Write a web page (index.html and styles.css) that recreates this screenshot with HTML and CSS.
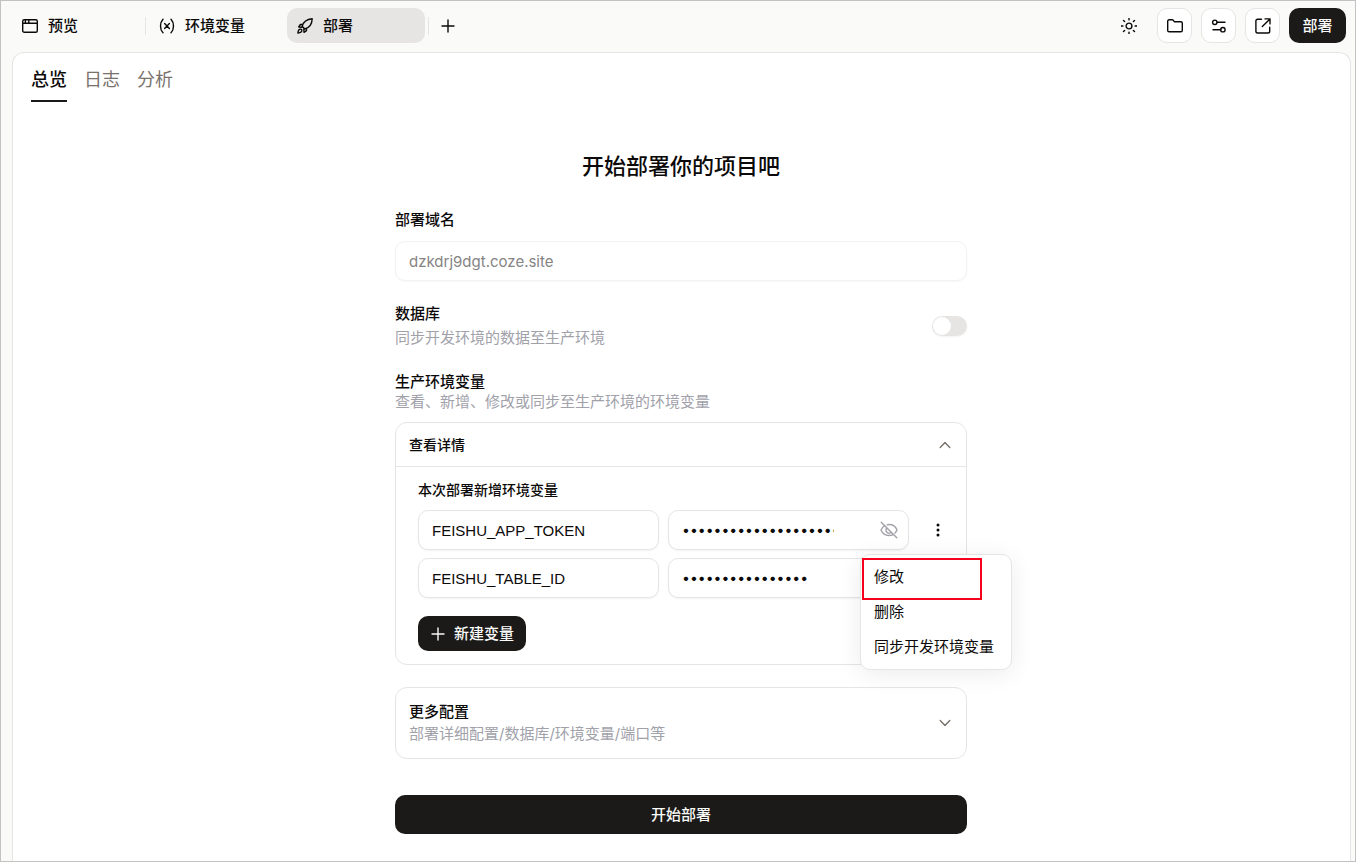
FILE: index.html
```html
<!DOCTYPE html>
<html lang="zh-CN">

<head>
    <meta charset="UTF-8">
    <meta name="viewport" content="width=device-width, initial-scale=1">
    <title>部署</title>
    <link rel="stylesheet" href="styles.css">
</head>

<body>
    <!-- 顶部栏 -->
    <header class="topbar">
        <nav class="tabs">
            <button type="button" class="tab tab-first">
                <svg class="icon" viewBox="0 0 16 16"><rect x="0.7" y="1.7" width="14.6" height="12.6" rx="1.6"/><path d="M0.7 5.2h14.6M3.4 2v3M6.8 2v3"/></svg>
                预览
            </button>
            <span class="separator"></span>
            <button type="button" class="tab">
                <svg class="icon" viewBox="0 0 16 16"><path d="M4 1.2C2.300 3 1.500 5.300 1.500 8s.8 5 2.500 6.800M12 1.200C13.700 3 14.500 5.300 14.500 8s-.8 5-2.500 6.800M5.600 5.600l4.800 4.800M10.400 5.600l-4.800 4.800"/></svg>
                环境变量
            </button>
            <button type="button" class="tab active">
                <svg class="icon" viewBox="0 0 16 16"><path d="M5.200 8.300C6.200 4.500 9.500 1.300 15.200 .800c-.2 5.700-3.300 9.100-7.400 10.200zM5.700 6.500H3.400L1.700 9l3.300.2M9.500 10.300v2.300L7 14.300l-.2-3.300M4.200 11.300c-1.900-.7-3 .8-3.300 3.800 3-.2 4.400-1.500 3.800-3.300z"/></svg>
                部署
            </button>
            <span class="separator"></span>
            <button type="button" class="tab-add" aria-label="新建标签页">
                <svg class="icon" viewBox="0 0 16 16"><path d="M8 2v12M2 8h12"/></svg>
            </button>
        </nav>
        <div class="actions">
            <button type="button" class="theme-button" aria-label="切换主题">
                <svg class="icon" viewBox="0 0 16 16"><circle cx="8" cy="8" r="2.900"/><path d="M8 .3v1.600M8 14.100v1.600M.3 8h1.600M14.100 8h1.600M2.500 2.500l1.100 1.100M12.400 12.400l1.100 1.100M2.500 13.500l1.100-1.100M12.400 3.600l1.100-1.100"/></svg>
            </button>
            <button type="button" class="icon-button" aria-label="文件">
                <svg class="icon" viewBox="0 0 16 16"><path d="M.7 12.400V3.200c0-.9.5-1.400 1.400-1.400h3.100c.5 0 .8.200 1.100.5l1 1.400h6.600c.9 0 1.400.5 1.400 1.400v7.300c0 .9-.5 1.400-1.400 1.400H2.100c-.9 0-1.400-.5-1.400-1.400z"/></svg>
            </button>
            <button type="button" class="icon-button" aria-label="设置">
                <svg class="icon" viewBox="0 0 16 16"><circle cx="3.800" cy="4.300" r="2.200"/><path d="M6 4.300h8M2 11.700h7.700"/><circle cx="11.900" cy="11.700" r="2.200"/></svg>
            </button>
            <button type="button" class="icon-button" aria-label="在新窗口打开">
                <svg class="icon" viewBox="0 0 16 16"><path d="M6.500 1.200H2.700C1.500 1.200.9 1.800.9 3v10.200c0 1.200.6 1.800 1.800 1.800h10.200c1.200 0 1.800-.6 1.800-1.800V9.300M10 .9h5v5M15 .9L7.300 8.600"/></svg>
            </button>
            <button type="button" class="primary deploy-button">部署</button>
        </div>
    </header>

    <main class="panel">
        <nav class="subtabs">
            <a href="#overview" class="active">总览</a>
            <a href="#logs">日志</a>
            <a href="#analytics">分析</a>
        </nav>

        <form class="deploy-form">
            <h1>开始部署你的项目吧</h1>

            <label class="label domain-label" for="domain">部署域名</label>
            <input type="text" id="domain" class="field" value="dzkdrj9dgt.coze.site" disabled>

            <!-- 数据库 -->
            <div class="database">
                <div>
                    <label class="label" for="sync-db">数据库</label>
                    <p class="hint">同步开发环境的数据至生产环境</p>
                </div>
                <input type="checkbox" id="sync-db" class="switch">
            </div>

            <!-- 环境变量 -->
            <h2 class="label">生产环境变量</h2>
            <p class="hint">查看、新增、修改或同步至生产环境的环境变量</p>

            <section class="card variables">
                <button type="button" class="card-toggle" aria-expanded="true">
                    查看详情
                    <svg class="chevron" viewBox="0 0 12 12"><path d="M1.200 8.500L6 3.500l4.800 5"/></svg>
                </button>
                <div class="card-body">
                    <h3>本次部署新增环境变量</h3>
                    <div class="variable-row">
                        <input type="text" class="field key" value="FEISHU_APP_TOKEN" aria-label="变量名">
                        <div class="field secret">
                            <input type="password" value="cli_a81f20c4d97be35602af" aria-label="变量值">
                            <button type="button" class="reveal" aria-label="显示变量值">
                                <svg class="icon" viewBox="0 0 18 18"><path d="M5 4.500C3.200 5.500 1.900 7 1 9c1.600 3.700 4.300 5.500 8 5.500 1.300 0 2.500-.2 3.500-.7M7.300 3.700C12 3 15.300 4.800 17 9c-.5 1.200-1.200 2.200-2 3M6.800 7.100a3 3 0 0 0 4.300 4.200M1.200 1.200l15.600 15.600"/></svg>
                            </button>
                        </div>
                        <div class="more">
                            <button type="button" aria-label="更多操作" aria-expanded="true">
                                <svg class="dots" viewBox="0 0 16 16"><circle cx="8" cy="3" r="1.500"/><circle cx="8" cy="8" r="1.500"/><circle cx="8" cy="13" r="1.500"/></svg>
                            </button>
                            <div class="menu">
                                <button type="button">修改</button>
                                <button type="button">删除</button>
                                <button type="button">同步开发环境变量</button>
                                <span class="highlight"></span>
                            </div>
                        </div>
                    </div>
                    <div class="variable-row">
                        <input type="text" class="field key" value="FEISHU_TABLE_ID" aria-label="变量名">
                        <div class="field secret">
                            <input type="password" value="tblX93kqP0aZ7mLd" aria-label="变量值">
                        </div>
                    </div>
                    <button type="button" class="primary add-button">
                        <svg class="icon" viewBox="0 0 16 16"><path d="M8 2v12M2 8h12"/></svg>
                        新建变量
                    </button>
                </div>
            </section>

            <button type="button" class="card more-config" aria-expanded="false">
                <span>
                    <span class="label">更多配置</span>
                    <span class="hint">部署详细配置/数据库/环境变量/端口等</span>
                </span>
                <svg class="chevron" viewBox="0 0 12 12"><path d="M1.200 3.500L6 8.500l4.800-5"/></svg>
            </button>

            <button type="submit" class="primary submit-button">开始部署</button>
        </form>
    </main>
</body>

</html>
```
FILE: styles.css
```css
* {
    box-sizing: border-box;
}

body {
    display: flex;
    flex-direction: column;
    min-height: 100vh;
    margin: 0;
    border: 1px solid #c2c2c2;
    background-color: #fafaf9;
    color: #0c0a09;
    font-family: Inter, "Noto Sans CJK SC", sans-serif;
    font-size: 15px;
    line-height: 22px;
}

h1, h2, h3, p {
    margin: 0;
}

button, input {
    font: inherit;
    color: inherit;
}

button {
    padding: 0;
    border: 0;
    background: none;
    cursor: pointer;
}

svg {
    display: block;
    flex: none;
    fill: none;
    stroke: currentColor;
    stroke-width: 1.4;
    stroke-linecap: round;
    stroke-linejoin: round;
}

.icon {
    width: 16px;
    height: 16px;
}

/* top bar */
.topbar {
    display: flex;
    align-items: center;
    justify-content: space-between;
    padding: 7px 9px 9px 11px;
}

.tabs, .actions {
    display: flex;
    align-items: center;
}

.tab {
    display: flex;
    align-items: center;
    gap: 10px;
    width: 138px;
    height: 35px;
    padding: 0 10px;
    border-radius: 10px;
    font-weight: 500;
}

.tab-first {
    width: 130px;
}

.tab.active {
    background-color: #e7e5e4;
}

.separator {
    width: 1px;
    height: 18px;
    margin: 0 3px;
    background-color: #e7e5e4;
}

.tab-add {
    display: flex;
    align-items: center;
    justify-content: center;
    width: 32px;
    height: 32px;
}

.actions {
    gap: 9px;
}

.theme-button, .icon-button {
    display: flex;
    align-items: center;
    justify-content: center;
    width: 35px;
    height: 35px;
}

.theme-button {
    width: 38px;
}

.icon-button {
    border: 1px solid #e7e5e4;
    border-radius: 10px;
    background-color: #fff;
}

.primary {
    border-radius: 10px;
    background-color: #1b1a18;
    color: #fafaf9;
    font-weight: 500;
}

.deploy-button {
    width: 57px;
    height: 35px;
}

/* panel */
.panel {
    flex: 1;
    margin: 0 4px 0 11px;
    padding: 0 1px 27px 0;
    border: 1px solid #e7e5e4;
    border-bottom: 0;
    border-radius: 12px 12px 0 0;
    background-color: #fff;
}

.subtabs {
    display: flex;
    gap: 17px;
    padding-left: 18px;
    font-size: 18px;
}

.subtabs a {
    height: 49px;
    padding-top: 16px;
    color: #78716c;
    text-decoration: none;
}

.subtabs .active {
    border-bottom: 2px solid #1b1a18;
    color: #0c0a09;
    font-weight: 500;
}

.deploy-form {
    width: 100%;
    max-width: 572px;
    margin: 48px auto 0;
}

.deploy-form h1 {
    margin-bottom: 27px;
    font-size: 22px;
    font-weight: 500;
    line-height: 32px;
    text-align: center;
}

.label {
    display: block;
    font-size: 15px;
    font-weight: 500;
    line-height: 22px;
}

.domain-label {
    margin-bottom: 10px;
}

.hint {
    color: #a1a1aa;
    font-weight: 400;
}

.field {
    width: 100%;
    height: 40px;
    padding: 0 13px;
    border: 1px solid #e7e5e4;
    border-radius: 10px;
    background-color: #fff;
    box-shadow: 0 1px 2px rgba(0, 0, 0, 0.05);
}

.field:disabled {
    border-color: #f3f2f1;
    color: #858483;
    box-shadow: 0 1px 2px rgba(0, 0, 0, 0.03);
}

.key {
    font-family: "Liberation Sans", Arial, sans-serif;
}

.database {
    display: flex;
    align-items: center;
    justify-content: space-between;
    margin: 22px 0 23px;
}

.database .hint {
    margin-top: 2px;
}

.switch {
    appearance: none;
    display: flex;
    width: 35px;
    height: 20px;
    margin: 0;
    padding: 1px;
    border-radius: 10px;
    background-color: #e7e5e4;
    box-shadow: 0 1px 2px rgba(0, 0, 0, 0.05);
}

.switch::before {
    content: "";
    width: 18px;
    height: 18px;
    border-radius: 50%;
    background-color: #fff;
}

.switch:checked {
    justify-content: flex-end;
    background-color: #1b1a18;
}

h2.label, h2 + .hint {
    line-height: 20px;
}

.card {
    border: 1px solid #e7e5e4;
    border-radius: 12px;
    background-color: #fff;
}

.variables {
    margin: 10px 0 22px;
}

.card-toggle {
    display: flex;
    align-items: center;
    justify-content: space-between;
    width: 100%;
    height: 44px;
    padding: 0 15px 0 13px;
    border-bottom: 1px solid #e7e5e4;
    font-size: 14px;
    font-weight: 500;
}

.chevron {
    width: 12px;
    height: 12px;
    color: #78716c;
}

.card-body {
    padding: 12px 9px 13px 22px;
}

.card-body h3 {
    margin-bottom: 9px;
    font-size: 14px;
    font-weight: 500;
}

.variable-row {
    display: grid;
    grid-template-columns: minmax(0, 1fr) minmax(0, 1fr) 39px;
    gap: 9px;
    margin-bottom: 8px;
}

.secret {
    display: flex;
    align-items: center;
    gap: 46px;
    padding-right: 10px;
}

.secret input {
    flex: 1;
    min-width: 0;
    padding: 0;
    border: 0;
    outline: 0;
    background: none;
    font-size: 14px;
}

.reveal {
    color: #a1a1aa;
}

.reveal .icon {
    width: 18px;
    height: 18px;
}

.more {
    position: relative;
    display: flex;
    align-items: center;
    justify-content: center;
}

.dots {
    width: 16px;
    height: 16px;
    fill: currentColor;
    stroke: none;
}

.menu {
    position: absolute;
    top: 44px;
    right: -55px;
    z-index: 1;
    padding: 4px 13px 5px;
    border: 1px solid #e7e5e4;
    border-radius: 10px;
    background-color: #fff;
    box-shadow: 0 4px 24px rgba(0, 0, 0, 0.08);
}

.menu button {
    display: block;
    width: 124px;
    height: 35px;
    text-align: left;
    white-space: nowrap;
}

.highlight {
    position: absolute;
    top: 3px;
    left: 1px;
    width: 120px;
    height: 42px;
    border: 2px solid #f5001d;
    pointer-events: none;
}

.add-button {
    display: flex;
    align-items: center;
    gap: 8px;
    height: 35px;
    margin-top: 18px;
    padding: 0 12px;
}

.more-config {
    display: flex;
    align-items: center;
    justify-content: space-between;
    width: 100%;
    height: 72px;
    padding: 0 15px 0 13px;
    text-align: left;
}

.submit-button {
    width: 100%;
    height: 39px;
    margin-top: 36px;
}
```
